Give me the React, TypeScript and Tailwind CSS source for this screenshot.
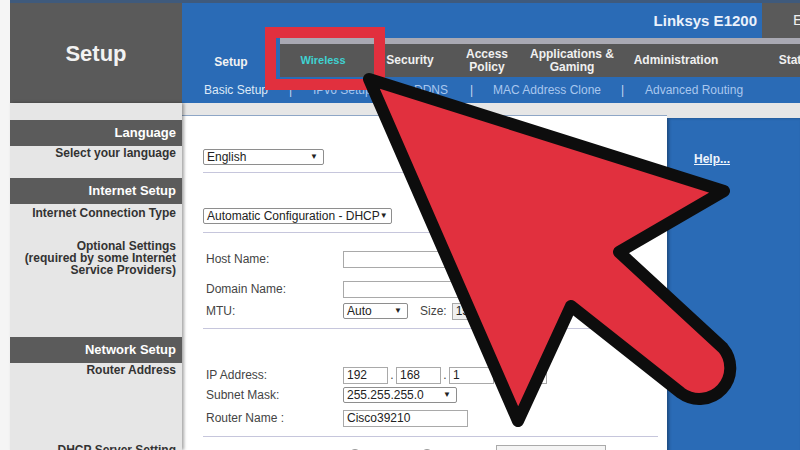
import React from "react";

const BLUE = "bg-[#2a6bb6]";

const TABS = [
  { label: "Wireless", w: "w-[86px]", active: true },
  { label: "Security", w: "w-[88px]" },
  { label: "Access\nPolicy", w: "w-[66px]" },
  { label: "Applications &\nGaming", w: "w-[104px]" },
  { label: "Administration", w: "w-[104px]" },
  { label: "Status", w: "w-[138px]" },
];

// sub menu items with their slot widths
const SUBNAV = [
  { label: "Basic Setup", w: "w-[85px]" },
  { label: "|", w: "w-[24px]" },
  { label: "IPv6 Setup", w: "w-[79px]" },
  { label: "|", w: "w-[22px]" },
  { label: "DDNS", w: "w-[56px]" },
  { label: "|", w: "w-[23px]" },
  { label: "MAC Address Clone", w: "w-[128px]" },
  { label: "|", w: "w-[24px]" },
  { label: "Advanced Routing", w: "w-[120px]" },
];

function Select({ value, w }: { value: string; w: string }) {
  return (
    <div className={`${w} h-[16px] border border-[#8e8e8e] rounded-[2px] bg-white flex items-center justify-between pl-[3px] pr-[5px] text-[12px] text-[#222] leading-none whitespace-nowrap`}>
      <span>{value}</span>
      <span className="text-[8px]">▼</span>
    </div>
  );
}

function Input({ value = "", w, gray }: { value?: string; w: string; gray?: boolean }) {
  return (
    <div className={`${w} h-[17px] border border-[#a9a9a9] ${gray ? "bg-[#f0f0f0]" : "bg-white"} flex items-center px-[3px] text-[12px] text-[#222] leading-none`}>
      {value}
    </div>
  );
}

function Row({ label, children, className = "" }: { label: string; children: React.ReactNode; className?: string }) {
  return (
    <div className={`flex items-center ${className}`}>
      <div className="w-[140px] pl-[3px] text-[12px] text-[#444]">{label}</div>
      {children}
    </div>
  );
}

function Divider({ className = "" }: { className?: string }) {
  return <div className={`h-px w-[455px] bg-[#c6c6dc] ${className}`} />;
}

function Bar({ title, className = "" }: { title: string; className?: string }) {
  return (
    <div className={`h-[26px] bg-[#5b5b5b] flex items-center justify-end pr-[6px] text-[13px] font-bold text-white ${className}`}>
      {title}
    </div>
  );
}

function Header() {
  return (
    <div className="flex h-[100px] shrink-0">
      <div className="w-[172px] bg-[#5a5a5a] flex items-center justify-center text-[22px] font-bold text-[#f2f2f2]">
        Setup
      </div>
      <div className="w-[618px] flex flex-col">
        <div className={`h-[35px] shrink-0 ${BLUE} flex justify-end`}>
          <div className="flex items-center pr-[5px] pt-[2px] text-[15px] font-bold text-[#eaf1fb]">Linksys E1200</div>
          <div className="w-[38px] bg-[#5a5a5a] overflow-hidden flex items-center pl-[31px] text-[15px] text-[#eee] whitespace-nowrap">
            E1200
          </div>
        </div>
        <div className="h-[39px] shrink-0 flex overflow-hidden">
          <div className={`w-[98px] shrink-0 ${BLUE} flex items-center justify-center pt-[8px] text-[12px] font-bold text-[#f2f2f2]`}>
            Setup
          </div>
          {TABS.map((t) => (
            <div
              key={t.label}
              className={`${t.w} shrink-0 border-t-[6px] border-[#a9a9b3] bg-[#575757] flex items-center justify-center text-center whitespace-pre leading-[13px] font-bold ${
                t.active ? "text-[11px] text-[#3fd2d2]" : "text-[12px] text-[#f0f0f0]"
              }`}
            >
              {t.label}
            </div>
          ))}
        </div>
        <div className={`h-[26px] shrink-0 ${BLUE} flex items-center pl-[22px] text-[12px] whitespace-nowrap`}>
          {SUBNAV.map((s, i) => (
            <span
              key={i}
              className={`${s.w} shrink-0 ${
                s.label === "|" ? "text-[#c4d7f0]" : i === 0 ? "text-[#dde9f7]" : "text-[#a9c7ee]"
              }`}
            >
              {s.label}
            </span>
          ))}
        </div>
      </div>
    </div>
  );
}

function LeftColumn() {
  return (
    <div className="w-[172px] shrink-0 bg-[#e6e6e6] relative z-10 shadow-[2px_0_3px_rgba(0,0,0,0.35)] pt-[17px] text-[12px] font-bold text-[#333] text-right">
      <Bar title="Language" />
      <div className="leading-[14px] pr-[6px]">Select your language</div>
      <Bar title="Internet Setup" className="mt-[18px]" />
      <div className="leading-[14px] pr-[6px] mt-[2px]">Internet Connection Type</div>
      <div className="leading-[12px] pr-[6px] mt-[20px]">
        Optional Settings
        <br />
        (required by some Internet
        <br />
        Service Providers)
      </div>
      <Bar title="Network Setup" className="mt-[61px]" />
      <div className="leading-[14px] pr-[6px]">Router Address</div>
      <div className="leading-[14px] pr-[6px] mt-[66px]">DHCP Server Setting</div>
    </div>
  );
}

function Content() {
  return (
    <div className="w-[485px] bg-white border-t border-[#8ea6c6] pl-[21px] pt-[33px]">
      <Select value="English" w="w-[121px]" />
      <Divider className="mt-[7px]" />
      <div className="mt-[35px]">
        <Select value="Automatic Configuration - DHCP" w="w-[189px]" />
      </div>
      <Divider className="mt-[8px]" />
      <Row label="Host Name:" className="mt-[17px]">
        <Input w="w-[150px]" />
      </Row>
      <Row label="Domain Name:" className="mt-[12px]">
        <Input w="w-[150px]" />
      </Row>
      <Row label="MTU:" className="mt-[4px]">
        <Select value="Auto" w="w-[65px]" />
        <span className="ml-[12px] text-[12px] text-[#444]">Size:</span>
        <div className="ml-[5px]">
          <Input value="1500" w="w-[50px]" gray />
        </div>
      </Row>
      <Divider className="mt-[8px]" />
      <Row label="IP Address:" className="mt-[37px]">
        <Input value="192" w="w-[45px]" />
        <span className="w-[8px] text-center text-[12px] text-[#444]">.</span>
        <Input value="168" w="w-[45px]" />
        <span className="w-[8px] text-center text-[12px] text-[#444]">.</span>
        <Input value="1" w="w-[45px]" />
        <span className="w-[8px] text-center text-[12px] text-[#444]">.</span>
        <Input value="1" w="w-[45px]" />
      </Row>
      <Row label="Subnet Mask:" className="mt-[2px]">
        <Select value="255.255.255.0" w="w-[114px]" />
      </Row>
      <Row label="Router Name :" className="mt-[5px]">
        <Input value="Cisco39210" w="w-[125px]" />
      </Row>
      <Divider className="mt-[9px]" />
      <Row label="DHCP Server:" className="mt-[8px]">
        <span className="ml-[6px] w-[12px] h-[12px] rounded-full border border-[#999] bg-white" />
        <span className="ml-[4px] text-[12px] text-[#444]">Enabled</span>
        <span className="ml-[12px] w-[12px] h-[12px] rounded-full border border-[#999] bg-white" />
        <span className="ml-[4px] text-[12px] text-[#444]">Disabled</span>
        <div className="ml-[12px] w-[110px] h-[20px] border border-[#aaa] bg-[#f4f4f4]" />
      </Row>
    </div>
  );
}

export default function App() {
  return (
    <div className="relative w-[800px] h-[450px] overflow-hidden bg-white flex font-['Liberation_Sans',Arial,sans-serif]">
      <div className="w-[10px] shrink-0 bg-[#f5f5f5]" />
      <div className="w-[790px] flex flex-col">
        <div className="h-[3px] shrink-0 bg-[#3f5a7c]" />
        <Header />
        <div className="flex flex-1 min-h-0">
          <LeftColumn />
          <div className="flex-1 flex flex-col bg-[#e6e6e6] pt-[12px]">
            <div className="flex flex-1">
              <Content />
              <div className={`flex-1 ${BLUE} mt-[3px] shadow-[inset_2px_0_3px_rgba(0,0,0,0.3)] pl-[27px] pt-[28px]`}>
                <span className="text-[12px] font-bold text-[#eef4fc] underline">Help...</span>
              </div>
            </div>
          </div>
        </div>
      </div>

      {/* highlight box round the Wireless tab */}
      <div className="absolute left-[265px] top-[27px] w-[120px] h-[63px] border-[11px] border-[#e1303e]" />

      {/* big pointer arrow */}
      <svg className="absolute inset-0 pointer-events-none" width="800" height="450" viewBox="0 0 800 450">
        <path
          d="M369,79 L724,191 L619,252 L723,348 A31,31 0 0 1 681,393 L571,306 L518,421 Z"
          fill="#e1303e"
          stroke="#0d0d0d"
          strokeWidth="12"
          strokeLinejoin="round"
        />
      </svg>
    </div>
  );
}
